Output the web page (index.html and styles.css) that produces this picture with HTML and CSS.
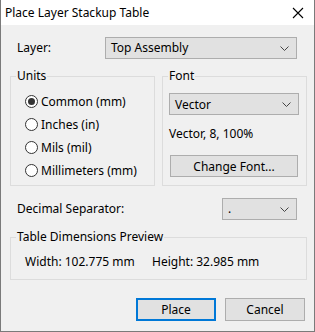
FILE: index.html
```html
<!DOCTYPE html>
<html lang="en">

<head>
    <meta charset="UTF-8">
    <title>Place Layer Stackup Table</title>
    <link rel="stylesheet" href="styles.css">
</head>

<body>
    <div class="window">
        <div class="titlebar">
            <span class="title">Place Layer Stackup Table</span>
            <svg class="close" width="12" height="12" viewBox="0 0 12 12">
                <path d="M1 1 L11 11 M11 1 L1 11" stroke="#000" stroke-width="1.1" fill="none"/>
            </svg>
        </div>

        <div class="content">
            <div class="row layer-row">
                <span class="label">Layer:</span>
                <div class="combo combo-layer">
                    <span>Top Assembly</span>
                    <svg class="chevron" width="9" height="5" viewBox="0 0 9 5"><path d="M0.5 0.5 L4.5 4.5 L8.5 0.5" stroke="#444" fill="none"/></svg>
                </div>
            </div>

            <div class="groups">
                <div class="group units">
                    <span class="group-title">Units</span>
                    <div class="radios">
                        <label class="radio checked"><span class="dot"></span>Common (mm)</label>
                        <label class="radio"><span class="dot"></span>Inches (in)</label>
                        <label class="radio"><span class="dot"></span>Mils (mil)</label>
                        <label class="radio"><span class="dot"></span>Millimeters (mm)</label>
                    </div>
                </div>

                <div class="group font">
                    <span class="group-title">Font</span>
                    <div class="font-body">
                        <div class="combo">
                            <span>Vector</span>
                            <svg class="chevron" width="9" height="5" viewBox="0 0 9 5"><path d="M0.5 0.5 L4.5 4.5 L8.5 0.5" stroke="#444" fill="none"/></svg>
                        </div>
                        <div class="font-info">Vector, 8, 100%</div>
                        <button class="btn change-font">Change Font...</button>
                    </div>
                </div>
            </div>

            <div class="row decimal-row">
                <span class="label">Decimal Separator:</span>
                <div class="combo combo-decimal">
                    <span>.</span>
                    <svg class="chevron" width="9" height="5" viewBox="0 0 9 5"><path d="M0.5 0.5 L4.5 4.5 L8.5 0.5" stroke="#444" fill="none"/></svg>
                </div>
            </div>

            <div class="group preview">
                <span class="group-title">Table Dimensions Preview</span>
                <div class="dims">
                    <span>Width: 102.775 mm</span>
                    <span>Height: 32.985 mm</span>
                </div>
            </div>

            <div class="actions">
                <button class="btn default">Place</button>
                <button class="btn">Cancel</button>
            </div>
        </div>
    </div>
</body>

</html>
```

FILE: styles.css
```css
body {
    margin: 0;
    font-family: "Noto Sans", "Segoe UI", sans-serif;
    font-size: 12px;
    color: #000;
}

.window {
    width: 315px;
    height: 332px;
    box-sizing: border-box;
    border: 1px solid #7a7a7a;
    border-top: none;
    background: #f0f0f0;
}

.titlebar {
    height: 25px;
    background: #fff;
    display: flex;
    align-items: center;
    justify-content: space-between;
    padding: 0 10px 0 4px;
}

.content {
    padding: 12px 7px 0 9px;
}

.row {
    display: flex;
    align-items: center;
    padding-left: 7px;
    line-height: 16px;
}

.row .label {
    flex: 1;
}

.combo {
    height: 22px;
    box-sizing: border-box;
    border: 1px solid #adadad;
    background: #e1e1e1;
    display: flex;
    align-items: center;
    justify-content: space-between;
    padding: 0 7px 0 5px;
}

.combo-layer {
    width: 192px;
    margin-right: 10px;
}

.combo-decimal {
    width: 75px;
    margin-right: 10px;
}

.chevron {
    display: block;
}

.groups {
    display: flex;
    gap: 7px;
    margin-top: 17px;
}

/* group box: title sits on the top border */
.group {
    border: 1px solid #dcdcdc;
    box-sizing: border-box;
}

.group-title {
    display: block;
    width: fit-content;
    margin: -9px 0 0 5px;
    padding: 0 1px;
    line-height: 16px;
    background: #f0f0f0;
}

.units,
.font {
    width: 145px;
    height: 110px;
}

.radios {
    padding: 6px 0 0 14px;
}

.radio {
    display: flex;
    align-items: center;
    height: 23px;
    gap: 3px;
    line-height: 16px;
}

.dot {
    width: 11px;
    height: 11px;
    border: 1px solid #333;
    border-radius: 50%;
    background: #fff;
    position: relative;
}

.checked .dot::after {
    content: "";
    position: absolute;
    left: 2px;
    top: 2px;
    width: 7px;
    height: 7px;
    border-radius: 50%;
    background: #333;
}

.font-body {
    padding: 9px 7px 0 6px;
    display: flex;
    flex-direction: column;
}

.font-info {
    margin-top: 11px;
    line-height: 16px;
}

.btn {
    font-family: inherit;
    font-size: 12px;
    color: #000;
    height: 23px;
    border: 1px solid #adadad;
    background: #e1e1e1;
    padding: 0;
}

.change-font {
    margin: 13px 1px 0;
    height: 22px;
}

.decimal-row {
    margin-top: 12px;
}

.preview {
    margin-top: 17px;
    width: 297px;
    padding-bottom: 9px;
}

.dims {
    display: grid;
    grid-template-columns: 127px auto;
    line-height: 16px;
    padding: 9px 0 0 14px;
}

.actions {
    display: flex;
    justify-content: flex-end;
    gap: 9px;
    margin-top: 18px;
    padding-right: 2px;
}

.actions .btn {
    width: 80px;
}

.btn.default {
    border: 2px solid #0078d7;
}
```
